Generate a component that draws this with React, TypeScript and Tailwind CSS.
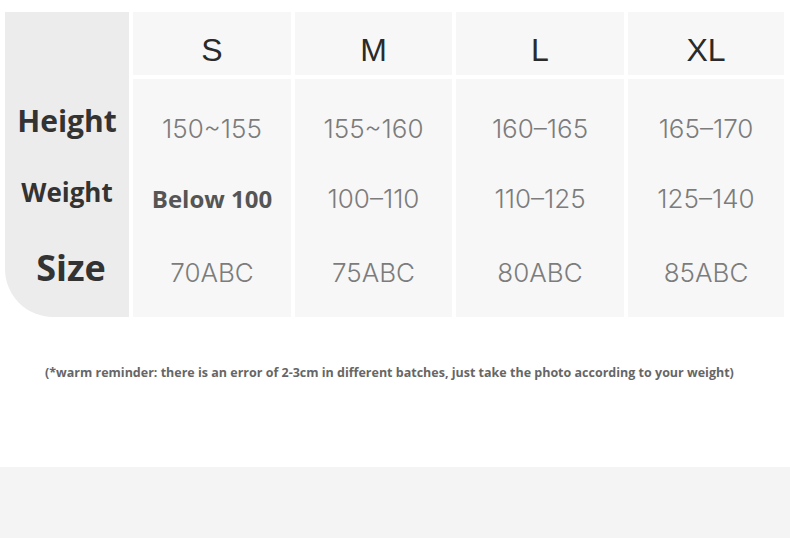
const sizes = [
  { name: "S", height: "150~155", weight: "Below 100", cup: "70ABC", w: "w-[158px]" },
  { name: "M", height: "155~160", weight: "100–110", cup: "75ABC", w: "w-[157px]" },
  { name: "L", height: "160–165", weight: "110–125", cup: "80ABC", w: "w-[168px]" },
  { name: "XL", height: "165–170", weight: "125–140", cup: "85ABC", w: "w-[156px]" },
];

function SizeColumn({ item }: { item: (typeof sizes)[number] }) {
  return (
    <div className={`flex flex-col gap-[4px] ${item.w}`}>
      <div className="h-[63px] bg-[#f7f7f7] flex items-center justify-center pt-[12px] text-[32px] text-[#2a2a2a] font-['Liberation_Sans',sans-serif]">
        {item.name}
      </div>
      <div className="h-[238px] bg-[#f7f7f7] flex flex-col items-center pt-[34px] text-[26px] leading-[32px] text-[#7c7c7c] font-['Inter',sans-serif] font-light">
        <div>{item.height}</div>
        {item.weight === "Below 100" ? (
          <div className="mt-[38px] text-[24px] font-bold text-[#555] font-['Open_Sans',sans-serif]">
            {item.weight}
          </div>
        ) : (
          <div className="mt-[38px]">{item.weight}</div>
        )}
        <div className="mt-[42px]">{item.cup}</div>
      </div>
    </div>
  );
}

export default function App() {
  return (
    <div className="w-[790px] h-[538px] bg-white flex flex-col">
      <div className="flex gap-[4px] pl-[5px] pt-[12px]">
        <div className="w-[124px] h-[305px] bg-[#ececec] rounded-bl-[48px] flex flex-col items-center pt-[89px] font-['Open_Sans',sans-serif] font-bold text-[#333]">
          <div className="h-[40px] leading-[40px] text-[30px]">Height</div>
          <div className="mt-[35px] h-[32px] leading-[32px] text-[26px]">Weight</div>
          <div className="mt-[40px] h-[40px] leading-[40px] text-[36px] pl-[8px]">Size</div>
        </div>
        {sizes.map((s) => (
          <SizeColumn key={s.name} item={s} />
        ))}
      </div>
      <div className="mt-[47px] pl-[45px] text-[12.5px] font-bold text-[#666] font-['Open_Sans',sans-serif]">
        (*warm reminder: there is an error of 2-3cm in different batches, just take the photo according to your weight)
      </div>
      <div className="flex-1" />
      <div className="h-[71px] bg-[#f4f4f4]" />
    </div>
  );
}
